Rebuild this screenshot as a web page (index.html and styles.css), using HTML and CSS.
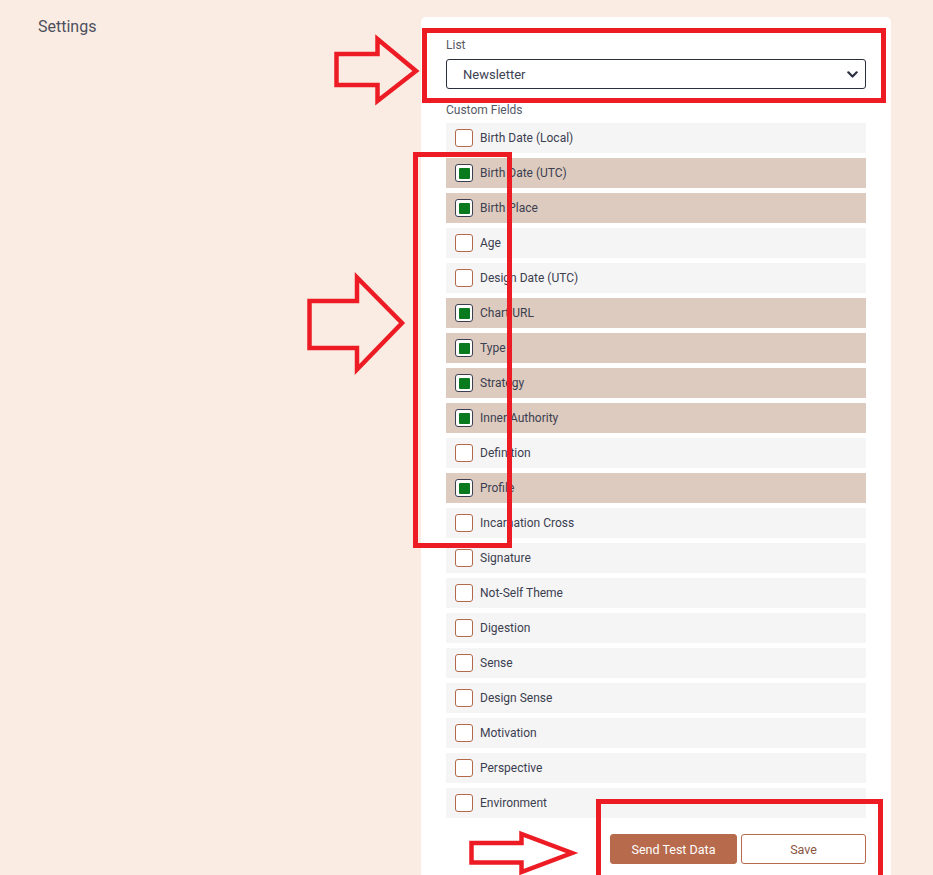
FILE: index.html
```html
<!DOCTYPE html>
<html lang="en">
<head>
<meta charset="utf-8">
<title>Settings</title>
<link rel="stylesheet" href="styles.css">
</head>
<body>
<div class="page">
  <aside class="side">
    <h1 class="side-title">Settings</h1>
  </aside>
  <main class="card">
    <label class="field-label list-label">List</label>
    <div class="select">
      <span class="select-value">Newsletter</span>
      <svg class="chevron" width="11" height="7" viewBox="0 0 11 7"><path d="M1.3 1.3 L5.5 5.5 L9.7 1.3" fill="none" stroke="#2b2f3d" stroke-width="2.2" stroke-linecap="round" stroke-linejoin="round"/></svg>
    </div>
    <label class="field-label fields-label">Custom Fields</label>
    <ul class="fields">
      <li class="row"><span class="box"></span><span class="row-text">Birth Date (Local)</span></li>
      <li class="row on"><span class="box"><span class="fill"></span></span><span class="row-text">Birth Date (UTC)</span></li>
      <li class="row on"><span class="box"><span class="fill"></span></span><span class="row-text">Birth Place</span></li>
      <li class="row"><span class="box"></span><span class="row-text">Age</span></li>
      <li class="row"><span class="box"></span><span class="row-text">Design Date (UTC)</span></li>
      <li class="row on"><span class="box"><span class="fill"></span></span><span class="row-text">Chart URL</span></li>
      <li class="row on"><span class="box"><span class="fill"></span></span><span class="row-text">Type</span></li>
      <li class="row on"><span class="box"><span class="fill"></span></span><span class="row-text">Strategy</span></li>
      <li class="row on"><span class="box"><span class="fill"></span></span><span class="row-text">Inner Authority</span></li>
      <li class="row"><span class="box"></span><span class="row-text">Definition</span></li>
      <li class="row on"><span class="box"><span class="fill"></span></span><span class="row-text">Profile</span></li>
      <li class="row"><span class="box"></span><span class="row-text">Incarnation Cross</span></li>
      <li class="row"><span class="box"></span><span class="row-text">Signature</span></li>
      <li class="row"><span class="box"></span><span class="row-text">Not-Self Theme</span></li>
      <li class="row"><span class="box"></span><span class="row-text">Digestion</span></li>
      <li class="row"><span class="box"></span><span class="row-text">Sense</span></li>
      <li class="row"><span class="box"></span><span class="row-text">Design Sense</span></li>
      <li class="row"><span class="box"></span><span class="row-text">Motivation</span></li>
      <li class="row"><span class="box"></span><span class="row-text">Perspective</span></li>
      <li class="row"><span class="box"></span><span class="row-text">Environment</span></li>
    </ul>
    <div class="actions">
      <button class="btn btn-primary">Send Test Data</button>
      <button class="btn btn-outline">Save</button>
    </div>
  </main>
</div>
<svg class="annotations" width="933" height="875" viewBox="0 0 933 875">
  <g fill="none" stroke="#ed1c24" stroke-width="5">
    <rect x="424.5" y="30.5" width="459" height="70"/>
    <rect x="415.5" y="154.5" width="94" height="391"/>
    <rect x="598.5" y="801.5" width="282" height="100"/>
  </g>
  <g fill="none" stroke="#ed1c24" stroke-width="4.5" stroke-linejoin="miter">
    <polygon points="336.5,54 377.5,54 377.5,39 416,71 377.5,101 377.5,85 336.5,85"/>
    <polygon points="309.5,301 357,301 357,277.5 402,323 357,369.5 357,348 309.5,348"/>
    <polygon points="471.5,843 521.5,843 521.5,834 572,853 521.5,872 521.5,862.5 471.5,862.5"/>
  </g>
</svg>
</body>
</html>
```
FILE: styles.css
```css
html, body {
  margin: 0;
  padding: 0;
  overflow: hidden;
}
body {
  background: #fbece3;
  font-family: Roboto, "Liberation Sans", Arial, sans-serif;
  color: #3b4050;
  width: 933px;
  height: 875px;
  position: relative;
}
.page {
  display: flex;
  align-items: flex-start;
  padding: 17px 0 0 38px;
}
.side {
  width: 383px;
  flex: none;
}
.side-title {
  margin: 0;
  font-size: 16px;
  line-height: 19px;
  font-weight: 400;
  color: #4b4f5c;
}
.card {
  width: 420px;
  flex: none;
  background: #fff;
  border-radius: 5px;
  padding: 19px 25px 30px;
  display: flex;
  flex-direction: column;
}
.field-label {
  font-size: 12px;
  line-height: 16px;
  color: #555a66;
}
.list-label {
  padding-top: 1px;
}
.select {
  margin-top: 6px;
  height: 30px;
  box-sizing: border-box;
  border: 1px solid #2b2f3d;
  border-radius: 3px;
  display: flex;
  align-items: center;
  justify-content: space-between;
  padding: 0 7px 0 16px;
}
.select-value {
  font-size: 13px;
  color: #3d4254;
}
.chevron {
  display: block;
  margin-top: 1px;
}
.fields-label {
  margin-top: 13px;
}
.fields {
  list-style: none;
  margin: 5px 0 0;
  padding: 0;
  display: flex;
  flex-direction: column;
  gap: 5px;
}
.row {
  height: 30px;
  background: #f5f5f5;
  display: flex;
  align-items: center;
  padding-left: 9px;
  gap: 7px;
}
.row.on {
  background: #decbbf;
}
.box {
  width: 18px;
  height: 18px;
  box-sizing: border-box;
  border: 1px solid #b5694c;
  border-radius: 3px;
  background: #fff;
  display: flex;
  align-items: center;
  justify-content: center;
  flex: none;
}
.row.on .box {
  border: 1.5px solid #3b3f4f;
}
.fill {
  width: 11px;
  height: 11px;
  background: #0a7a1e;
  border-radius: 1px;
}
.row-text {
  font-size: 12px;
  color: #3b4050;
}
.actions {
  margin-top: 16px;
  display: flex;
  justify-content: flex-end;
  gap: 4px;
}
.btn {
  height: 30px;
  box-sizing: border-box;
  border-radius: 3px;
  font-family: inherit;
  font-size: 12.5px;
  padding: 0;
  cursor: pointer;
}
.btn-primary {
  width: 127px;
  background: #b76a4c;
  border: 1px solid #b76a4c;
  color: #fff;
}
.btn-outline {
  width: 125px;
  background: #fff;
  border: 1px solid #b76a4c;
  color: #8a5642;
}
.annotations {
  position: absolute;
  left: 0;
  top: 0;
  pointer-events: none;
}
```
